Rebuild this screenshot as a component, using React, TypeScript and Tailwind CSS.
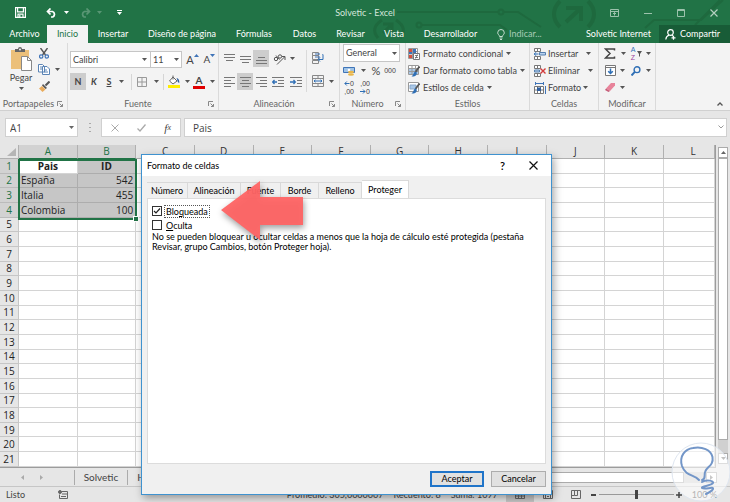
import { useState } from 'react';
import type { ReactNode } from 'react';

const ribbonTabs = [
  { name: 'Archivo', cls: 'w-[45px]' },
  { name: 'Inicio', cls: 'w-[41px]' },
  { name: 'Insertar', cls: 'w-[50px]' },
  { name: 'Diseño de página', cls: 'w-[88px]' },
  { name: 'Fórmulas', cls: 'w-[56px]' },
  { name: 'Datos', cls: 'w-[45px]' },
  { name: 'Revisar', cls: 'w-[47px]' },
  { name: 'Vista', cls: 'w-[40px]' },
  { name: 'Desarrollador', cls: 'w-[73px]' },
];

const columns = ['A', 'B', 'C', 'D', 'E', 'F', 'G', 'H', 'I', 'J', 'K', 'L'];
const rows = Array.from({ length: 21 }, (_, i) => i + 1);

const cells: Record<string, string> = {
  A1: 'Pais', B1: 'ID',
  A2: 'España', B2: '542',
  A3: 'Italia', B3: '455',
  A4: 'Colombia', B4: '100',
};

const dialogTabs = [
  { name: 'Número', cls: 'w-[41px]' },
  { name: 'Alineación', cls: 'w-[53px]' },
  { name: 'Fuente', cls: 'w-[40px]' },
  { name: 'Borde', cls: 'w-[38px]' },
  { name: 'Relleno', cls: 'w-[43px]' },
  { name: 'Proteger', cls: 'w-[47px]' },
];

function Caret({ className = 'text-[#555]' }: { className?: string }) {
  return (
    <svg className={`w-[5px] h-[3px] shrink-0 ${className}`} viewBox="0 0 5 3" fill="currentColor">
      <path d="M0 0h5L2.5 3z" />
    </svg>
  );
}

function IconBtn({ label, className = '', children }: { label: string; className?: string; children: ReactNode }) {
  return (
    <button type="button" aria-label={label} className={`flex items-center justify-center shrink-0 ${className}`}>
      {children}
    </button>
  );
}

function Group({ label, className, launcher, children }: { label: string; className: string; launcher?: boolean; children: ReactNode }) {
  return (
    <section className={`flex flex-col shrink-0 border-r border-[#dadada] ${className}`}>
      <div className="h-[54px]">{children}</div>
      <div className="h-[13px] flex items-center text-[9px] text-[#666]">
        <span className="flex-1 text-center">{label}</span>
        {launcher && (
          <IconBtn label={`Más opciones de ${label}`} className="mr-1">
            <svg className="w-[6px] h-[6px]" viewBox="0 0 6 6" fill="none" stroke="#888" strokeWidth="1">
              <path d="M.5 5V.5H5M2.500 2.500l3 3M5.500 3v2.500H3" />
            </svg>
          </IconBtn>
        )}
      </div>
    </section>
  );
}

function Lines({ d }: { d: string }) {
  return (
    <svg className="w-[11px] h-[11px]" viewBox="0 0 11 11" stroke="#777" strokeWidth="1">
      <path d={d} />
    </svg>
  );
}

function StyleIcon({ kind }: { kind: 'cond' | 'table' | 'cell' }) {
  return (
    <svg className="w-[12px] h-[12px] shrink-0" viewBox="0 0 12 12" fill="none">
      {kind === 'cond' ? (
        <>
          <path d="M.5.5h9v10h-9zM.5 3.500h9M.5 7h9M4.500.5v10" stroke="#999" fill="#fff" />
          <path d="M1 1h3v3H1zM1 7h3v3H1z" fill="#d6503f" />
          <path d="M5 1h3v5H5zM1 4h3v2H1z" fill="#3f74b8" />
          <path d="M5.500 5.500h6v6h-6z" fill="#fff" stroke="#777" />
          <path d="M7 7.500h3M7 9.500h3M9.500 6.500l-2 4" stroke="#555" strokeWidth=".7" />
        </>
      ) : (
        <>
          <path d="M.5.5h10v9H.5z" stroke="#999" fill="#fff" />
          {kind === 'table' && <path d="M1 4h9v5H1z" fill="#a9c8e8" />}
          {kind === 'table' && <path d="M.5 3.500h10M.5 6.500h10M4 .5v9M7.500.5v9" stroke="#999" />}
          {kind === 'cell' && <path d="M2 3h6v4H2z" fill="#a9c8e8" stroke="#8aa9cc" />}
          <path d="M11.500 1.500L7.500 7" stroke="#555" strokeWidth="1.800" />
          <path d="M7.500 6.500C5.500 7 6 9.500 3.500 11.500c3 .5 5.700-.8 5.200-4z" fill="#2f6fb5" />
        </>
      )}
    </svg>
  );
}

function CellsIcon({ kind }: { kind: 'insert' | 'delete' | 'format' }) {
  return (
    <svg className="w-[12px] h-[12px] shrink-0" viewBox="0 0 12 12" fill="none" stroke="#777">
      {kind === 'format' ? (
        <>
          <path d="M1.500 0v3M9.500 0v3M1.500 1.500h8" stroke="#3f74b8" />
          <path d="M.5 4.500h9v7h-9zM3.500 4.500v7M6.500 4.500v7M.5 8h9" fill="#fff" />
          <path d="M3 5.500h4v3.500H3z" fill="#2f5f9f" stroke="none" />
          <path d="M11.500 4v8" stroke="#3f74b8" />
        </>
      ) : (
        <>
          <path d="M.5.5h6v3h-6zM3.500.5v3M.5 8.500h6v3h-6zM3.500 8.500v3" fill="#fff" />
          {kind === 'insert' ? (
            <>
              <path d="M5.500 4.500h6v2.500h-6z" fill="#b9d2ee" stroke="#5580b0" />
              <path d="M4.500 6H0M2 4.200L.3 6 2 7.800" stroke="#2f6fb5" />
            </>
          ) : (
            <>
              <path d="M.5 5h5v2h-5z" fill="#b9d2ee" stroke="#5580b0" />
              <path d="M6.500 3.500l5 5M11.500 3.500l-5 5" stroke="#d23a3a" strokeWidth="1.400" />
            </>
          )}
        </>
      )}
    </svg>
  );
}

function TitleBar() {
  return (
    <div className="relative h-[25px] flex items-center text-white">
      <div className="flex items-center flex-1">
        <IconBtn label="Guardar" className="ml-[15px]">
          <svg className="w-[11px] h-[11px]" viewBox="0 0 11 11" fill="none" stroke="#fff" strokeWidth="1.200">
            <path d="M.6.600h9.800v9.800H.6zM2.600.8v4h5.800v-4M3 10.200V7.200h5v3M4.800 8v2" />
          </svg>
        </IconBtn>
        <IconBtn label="Deshacer" className="ml-5 gap-[7px]">
          <svg className="w-[11px] h-[10px]" viewBox="0 0 11 10" fill="none" stroke="#fff" strokeWidth="1.700">
            <path d="M4.500.5L1.500 3.500l3 3M1.500 3.500h5a3 3 0 0 1 .3 5.500H5" />
          </svg>
          <Caret className="text-white" />
        </IconBtn>
        <IconBtn label="Rehacer" className="ml-[11px] gap-[6px] opacity-25">
          <svg className="w-[11px] h-[10px]" viewBox="0 0 11 10" fill="none" stroke="#fff" strokeWidth="1.700">
            <path d="M6.500.5l3 3-3 3M9.500 3.500h-5A3 3 0 0 0 4.200 9H6" />
          </svg>
          <Caret className="text-white" />
        </IconBtn>
        <IconBtn label="Personalizar barra" className="ml-[15px]">
          <svg className="w-[5px] h-[5px]" viewBox="0 0 5 5" fill="#fff">
            <path d="M0 0h5v1H0zM0 2h5L2.500 5z" />
          </svg>
        </IconBtn>
      </div>
      <h1 className="pl-3 text-[9px] text-[#d5e6dc]">Solvetic - Excel</h1>
      <div className="flex-1 flex items-center justify-end gap-[25px] pr-3">
        <IconBtn label="Opciones de la cinta">
          <svg className="w-[9px] h-[8px]" viewBox="0 0 9 8" fill="none" stroke="#9cc2ac">
            <path d="M.5.5h8v7h-8zM.5 2.500h8M4.500 6.500v-3M3 5l1.500-1.500L6 5" />
          </svg>
        </IconBtn>
        <IconBtn label="Minimizar">
          <svg className="w-[8px] h-[8px]" viewBox="0 0 8 8" stroke="#9cc2ac"><path d="M0 4.500h8" /></svg>
        </IconBtn>
        <IconBtn label="Maximizar">
          <svg className="w-[8px] h-[8px]" viewBox="0 0 8 8" fill="none" stroke="#9cc2ac"><path d="M.5.5h7v7h-7zM0 1.500h8" /></svg>
        </IconBtn>
        <IconBtn label="Cerrar">
          <svg className="w-[8px] h-[8px]" viewBox="0 0 8 8" stroke="#b5d0c0" strokeWidth="1.200"><path d="M.5.5l7 7M7.500.5l-7 7" /></svg>
        </IconBtn>
      </div>
    </div>
  );
}

// Circuit pattern behind the right half of the title bar
function Circuit() {
  return (
    <svg className="absolute right-0 top-0 w-[370px] h-[43px]" viewBox="0 0 370 43" fill="none" stroke="#1e693e" strokeWidth="2">
      <path d="M37 12h101M144 12h14l23 15M62 25h78l7 5" />
      <circle cx="141" cy="12" r="2.500" />
      <circle cx="59" cy="25" r="2.500" />
      <path d="M22 20c-9 6-9 12-4 18M36 20c9 6 9 12 4 18" strokeWidth="3" />
      <path d="M23 24h9v9M32 24l-9 9" strokeWidth="3" />
      <path d="M200 1c-8 8-8 18 0 26M228 1c8 8 8 18 0 26" strokeWidth="4" />
      <path d="M206 8h15v13M221 8l-15 14" strokeWidth="4" />
      <path d="M285 28l9-8h47l22-20M335 25l25-25" />
    </svg>
  );
}

function RibbonTabs() {
  const [active, setActive] = useState('Inicio');
  return (
    <nav className="relative h-[18px] flex pl-[2px] text-[9px] text-white">
      {ribbonTabs.map((t) => (
        <button
          key={t.name}
          type="button"
          onClick={() => setActive(t.name)}
          className={`shrink-0 whitespace-nowrap text-center ${t.cls} ${active === t.name ? 'bg-[#f3f3f3] text-[#217346]' : ''}`}
        >
          {t.name}
        </button>
      ))}
      <button type="button" className="ml-[10px] flex items-center gap-1 text-[#a8cbb7]">
        <svg className="w-[8px] h-[11px]" viewBox="0 0 8 11" fill="none" stroke="#c5dccf">
          <path d="M2.500 7.500C2.500 6 .7 5.500.7 3.800a3.300 3.300 0 0 1 6.600 0C7.300 5.500 5.500 6 5.500 7.500zM2.500 9h3M3 10.500h2" />
        </svg>
        Indicar...
      </button>
      <div className="flex-1" />
      <button type="button" className="pr-2 whitespace-nowrap">Solvetic Internet</button>
      <button type="button" className="w-[71px] pr-1 bg-[#185c37] flex items-center justify-center gap-1">
        <svg className="w-[11px] h-[11px]" viewBox="0 0 11 11" fill="none" stroke="#fff" strokeWidth="1.200">
          <circle cx="5.500" cy="3.500" r="2.800" />
          <path d="M.8 10.500c.3-2.500 1.500-3.800 3.200-4.300M7 6.200l1.500 1.500M6.500 8.800h4M8.500 6.800v4" />
        </svg>
        Compartir
      </button>
    </nav>
  );
}

function Ribbon() {
  const btn = 'w-[16px] h-[17px]';
  const tiny = "font-['Liberation_Sans',sans-serif] text-[7px] leading-[8px]";
  return (
    <div className="h-[68px] flex bg-[#f3f3f3] border-b border-[#d0d0d0] text-[9px] text-[#444]">
      <Group label="Portapapeles" className="w-[68px]" launcher>
        <div className="flex pl-2 pt-1">
          <button type="button" className="w-[26px] flex flex-col items-center">
            <svg className="w-[22px] h-[24px]" viewBox="0 0 22 24">
              <path d="M1 3h18v19H1z" fill="#ecc07a" />
              <path d="M5 5V2h3a2 2 0 0 1 4 0h3v3z" fill="#666" />
              <circle cx="10" cy="2.500" r="1" fill="#f3f3f3" />
              <path d="M11.500 9.500h6l4 4v10h-10z" fill="#fff" stroke="#888" />
              <path d="M17.500 9.500v4h4" fill="none" stroke="#888" />
            </svg>
            <span className="leading-[13px]">Pegar</span>
            <Caret className="mt-[3px] text-[#555]" />
          </button>
          <div className="ml-1 flex flex-col gap-1">
            <IconBtn label="Cortar" className="w-[11px] h-[12px]">
              <svg className="w-[10px] h-[11px]" viewBox="0 0 10 11" fill="none">
                <path d="M1.500 0l5 7M8.500 0l-5 7" stroke="#555" strokeWidth="1.400" />
                <circle cx="2.200" cy="8.500" r="1.700" stroke="#3f74b8" strokeWidth="1.200" />
                <circle cx="7.800" cy="8.500" r="1.700" stroke="#3f74b8" strokeWidth="1.200" />
              </svg>
            </IconBtn>
            <IconBtn label="Copiar" className="h-[13px] gap-[5px]">
              <svg className="w-[12px] h-[11px]" viewBox="0 0 12 11" fill="#fff" stroke="#5b84b5">
                <path d="M.5.5h4l2 2v5.500h-6zM4.500 2.500h4.500l2.500 2.500v5.500h-7z" />
                <path d="M2 3h2M2 5h2M6 6h3M6 8h4" />
              </svg>
              <Caret />
            </IconBtn>
            <IconBtn label="Copiar formato" className="w-[12px] h-[13px]">
              <svg className="w-[11px] h-[11px]" viewBox="0 0 11 11">
                <path d="M10.500.5L6.500 4.500" stroke="#555" strokeWidth="2" />
                <path d="M4 3l4 4-1.500 1L3 4.500z" fill="#555" />
                <path d="M3 5l3.500 3.500L3.500 11 0 7.500z" fill="#e9ab5b" />
              </svg>
            </IconBtn>
          </div>
        </div>
      </Group>

      <Group label="Fuente" className="w-[151px]" launcher>
        <div className="flex items-center pt-2 pl-[2px]">
          <div className="relative">
            <select aria-label="Fuente" className="appearance-none w-[81px] h-[17px] pl-[2px] bg-white border border-[#c6c6c6] text-[9px]">
              <option>Calibri</option>
            </select>
            <Caret className="absolute right-1 top-[7px] text-[#555]" />
          </div>
          <div className="relative">
            <select aria-label="Tamaño de fuente" className="appearance-none w-[31px] h-[17px] pl-[2px] bg-white border border-l-0 border-[#c6c6c6] text-[9px]">
              <option>11</option>
            </select>
            <Caret className="absolute right-[3px] top-[7px] text-[#555]" />
          </div>
          <IconBtn label="Aumentar tamaño" className="ml-1 w-[13px] text-[11px] leading-[17px]">
            A<Caret className="mb-2 rotate-180 text-[#3f74b8]" />
          </IconBtn>
          <IconBtn label="Disminuir tamaño" className="ml-1 w-[13px] text-[10px] leading-[17px]">
            A<Caret className="mb-2 text-[#3f74b8]" />
          </IconBtn>
        </div>
        <div className="flex items-center pt-[5px] pl-[2px]">
          <IconBtn label="Negrita" className={`${btn} bg-[#cdcdcd] font-bold`}>N</IconBtn>
          <IconBtn label="Cursiva" className={`${btn} font-bold italic`}>K</IconBtn>
          <IconBtn label="Subrayado" className="w-[27px] gap-2 font-bold">
            <span className="underline">S</span><Caret />
          </IconBtn>
          <span className="w-px h-[16px] bg-[#d5d5d5] mx-[2px]" />
          <IconBtn label="Bordes" className="w-[27px] gap-[7px]">
            <svg className="w-[10px] h-[10px]" viewBox="0 0 10 10" fill="none" stroke="#999">
              <path d="M.5.5h9v9h-9zM5 .5v9M.5 5h9" />
            </svg>
            <Caret />
          </IconBtn>
          <span className="w-px h-[16px] bg-[#d5d5d5] mx-[2px]" />
          <IconBtn label="Color de relleno" className="w-[25px] gap-1">
            <svg className="w-[13px] h-[13px]" viewBox="0 0 13 13">
              <path d="M0 10h12v3H0z" fill="#ffee00" />
              <path d="M5 2l4 4-4 3-3.500-3zM5 .5v4" fill="#fff" stroke="#666" />
              <path d="M8.500 3c2 .5 3 2 2.800 5-1.500-.5-2-2-2-3z" fill="#2f5f9f" />
            </svg>
            <Caret />
          </IconBtn>
          <IconBtn label="Color de fuente" className="w-[26px] gap-[5px]">
            <span className="w-[12px] border-b-[3px] border-[#e00000] text-[10px] leading-[11px] font-bold">A</span>
            <Caret />
          </IconBtn>
        </div>
      </Group>

      <Group label="Alineación" className="w-[121px]" launcher>
        <div className="flex">
          <div className="w-[88px] border-r border-[#dadada] mt-[7px] h-[42px]">
            <div className="flex pl-[2px]">
              <IconBtn label="Alinear arriba" className={btn}><Lines d="M0 1.500h11M0 4.500h11M2 7.500h7" /></IconBtn>
              <IconBtn label="Alinear en medio" className={btn}><Lines d="M0 3.500h11M0 6.500h11M2 9.500h7" /></IconBtn>
              <IconBtn label="Alinear abajo" className={`${btn} bg-[#cdcdcd]`}><Lines d="M2 4.500h7M0 7.500h11M0 10.500h11" /></IconBtn>
              <IconBtn label="Orientación" className="ml-1 gap-1">
                <svg className="w-[13px] h-[12px]" viewBox="0 0 13 12" fill="none" stroke="#555">
                  <circle cx="3" cy="6" r="1.700" />
                  <path d="M3 2.500l3.500 4" />
                  <circle cx="7" cy="3.500" r="1.700" />
                  <path d="M4 11.500L11.500 4M12 7V3.500H8.800" />
                </svg>
                <Caret />
              </IconBtn>
            </div>
            <div className="flex pl-[2px] mt-[6px]">
              <IconBtn label="Alinear a la izquierda" className={btn}><Lines d="M0 1.500h11M0 4.500h7M0 7.500h11M0 10.500h7" /></IconBtn>
              <IconBtn label="Centrar" className={`${btn} bg-[#cdcdcd]`}><Lines d="M0 1.500h11M2 4.500h7M0 7.500h11M2 10.500h7" /></IconBtn>
              <IconBtn label="Alinear a la derecha" className={btn}><Lines d="M0 1.500h11M4 4.500h7M0 7.500h11M4 10.500h7" /></IconBtn>
              <IconBtn label="Disminuir sangría" className="w-[18px]">
                <svg className="w-[12px] h-[10px]" viewBox="0 0 12 10" fill="none" stroke="#777">
                  <path d="M0 .5h12M6 3.500h6M6 6.500h6M0 9.500h12" />
                  <path d="M5 5H.5M2.500 3L.7 5l1.800 2" stroke="#2f6fb5" strokeWidth="1.300" />
                </svg>
              </IconBtn>
              <IconBtn label="Aumentar sangría" className="w-[18px]">
                <svg className="w-[12px] h-[10px]" viewBox="0 0 12 10" fill="none" stroke="#777">
                  <path d="M0 .5h12M7 3.500h5M7 6.500h5M0 9.500h12" />
                  <path d="M0 5h5M3.500 3l1.800 2-1.800 2" stroke="#2f6fb5" strokeWidth="1.300" />
                </svg>
              </IconBtn>
            </div>
          </div>
          <div className="pl-[5px] pt-[9px] flex flex-col gap-[11px] items-start">
            <IconBtn label="Ajustar texto">
              <svg className="w-[12px] h-[12px]" viewBox="0 0 12 12" fill="none" stroke="#888">
                <path d="M.5.5h6v3h-6zM.5 3.500h6v4h-6zM.5 8.500h6v3h-6z" />
                <path d="M3 2h5M3 5h5" stroke="#3f74b8" />
                <path d="M10.500 2.500H11v5H6.500M8 5.500l-2 2 2 2" stroke="#2f6fb5" />
              </svg>
            </IconBtn>
            <IconBtn label="Combinar y centrar" className="gap-[5px]">
              <svg className="w-[12px] h-[12px]" viewBox="0 0 12 12" fill="none" stroke="#888">
                <path d="M.5.5h11v11H.5zM6 .5v3M6 8.500v3M.5 3.500h11M.5 8.500h11" />
                <path d="M2 6h8M3.500 4.800L2 6l1.500 1.200M8.500 4.800L10 6 8.500 7.200" stroke="#2f6fb5" />
              </svg>
              <Caret />
            </IconBtn>
          </div>
        </div>
      </Group>

      <Group label="Número" className="w-[66px]" launcher>
        <div className="pl-[3px] pt-px">
          <div className="relative w-[57px]">
            <select aria-label="Formato de número" className="block appearance-none w-full h-[18px] pl-[2px] bg-white border border-[#c6c6c6] text-[9px]">
              <option>General</option>
            </select>
            <Caret className="absolute right-[3px] top-2 text-[#555]" />
          </div>
          <div className="flex items-center h-[17px]">
            <IconBtn label="Formato de contabilidad" className="gap-[5px]">
              <svg className="w-[13px] h-[10px]" viewBox="0 0 13 10">
                <path d="M.5 1.500h11v5H.5z" fill="#9fc3e6" stroke="#3f74b8" />
                <circle cx="6" cy="4" r="1.300" fill="#fff" />
                <ellipse cx="8" cy="6" rx="3" ry="1.200" fill="#e9b64a" />
                <ellipse cx="8" cy="8.500" rx="3" ry="1.200" fill="#e9b64a" />
              </svg>
              <Caret />
            </IconBtn>
            <IconBtn label="Estilo porcentual" className="ml-[3px] w-[14px] text-[11px] leading-[14px]">%</IconBtn>
            <IconBtn label="Estilo millares" className={`w-[14px] ${tiny}`}>000</IconBtn>
          </div>
          <div className="flex items-center h-[17px] gap-1">
            <IconBtn label="Aumentar decimales" className={`w-[12px] ${tiny}`}>
              <span className="flex flex-col items-end">
                <span className="flex items-center">
                  <svg className="w-[6px] h-[5px]" viewBox="0 0 6 5" fill="none" stroke="#2f6fb5"><path d="M5.500 2.500H1M2.800.5l-2 2 2 2" /></svg>
                  0
                </span>
                <span>,00</span>
              </span>
            </IconBtn>
            <IconBtn label="Disminuir decimales" className={`w-[12px] ${tiny}`}>
              <span className="flex flex-col items-end">
                <span>,00</span>
                <span className="flex items-center">
                  <svg className="w-[6px] h-[5px]" viewBox="0 0 6 5" fill="none" stroke="#2f6fb5"><path d="M0 2.500h5M3 .5l2 2-2 2" /></svg>
                  0
                </span>
              </span>
            </IconBtn>
          </div>
        </div>
      </Group>

      <Group label="Estilos" className="w-[124px]">
        <div className="flex flex-col items-start pl-[2px] pt-[2px]">
          <button type="button" className="h-[17px] flex items-center gap-[3px] whitespace-nowrap"><StyleIcon kind="cond" />Formato condicional<Caret /></button>
          <button type="button" className="h-[17px] flex items-center gap-[3px] whitespace-nowrap"><StyleIcon kind="table" />Dar formato como tabla<Caret /></button>
          <button type="button" className="h-[17px] flex items-center gap-[3px] whitespace-nowrap"><StyleIcon kind="cell" />Estilos de celda<Caret /></button>
        </div>
      </Group>

      <Group label="Celdas" className="w-[69px]">
        <div className="flex flex-col items-start pl-1 pt-[2px]">
          <button type="button" className="h-[17px] flex items-center gap-[2px]"><CellsIcon kind="insert" />Insertar<Caret className="ml-[6px] text-[#555]" /></button>
          <button type="button" className="h-[17px] flex items-center gap-[2px]"><CellsIcon kind="delete" />Eliminar<Caret className="ml-[6px] text-[#555]" /></button>
          <button type="button" className="h-[17px] flex items-center gap-[2px]"><CellsIcon kind="format" />Formato<Caret /></button>
        </div>
      </Group>

      <Group label="Modificar" className="w-[57px]">
        <div className="grid grid-cols-[26px_26px] pl-[3px] pt-[2px]">
          <IconBtn label="Autosuma" className="h-[17px] gap-[5px]">
            <svg className="w-[12px] h-[11px]" viewBox="0 0 12 11" fill="none" stroke="#444" strokeWidth="1.500"><path d="M10.500 2.500V1h-9l4.500 4.500L1.500 10h9V8.500" /></svg>
            <Caret />
          </IconBtn>
          <IconBtn label="Ordenar y filtrar" className="h-[17px] gap-[2px]">
            <span className={`flex flex-col ${tiny}`}><span className="text-[#2f6fb5]">A</span><span className="text-[#9b3fa0]">Z</span></span>
            <svg className="w-[5px] h-[6px]" viewBox="0 0 5 6" fill="#555"><path d="M0 0h5L3 3v3L2 5V3z" /></svg>
            <Caret className="ml-[2px] text-[#555]" />
          </IconBtn>
          <IconBtn label="Rellenar" className="h-[17px] gap-1">
            <svg className="w-[11px] h-[11px]" viewBox="0 0 11 11" fill="#fff" stroke="#777">
              <path d="M.5.5h10v10H.5zM.5 2.500h10" />
              <path d="M5.500 3.500v5M3.200 6.200l2.300 2.300 2.300-2.300" fill="none" stroke="#2f6fb5" strokeWidth="1.500" />
            </svg>
            <Caret />
          </IconBtn>
          <IconBtn label="Buscar y seleccionar" className="h-[17px] gap-[5px]">
            <svg className="w-[10px] h-[10px]" viewBox="0 0 10 10" fill="none" stroke="#2f6fb5" strokeWidth="1.400"><circle cx="6" cy="3.700" r="2.900" /><path d="M3.800 5.900L.5 9.500" strokeWidth="2" /></svg>
            <Caret />
          </IconBtn>
          <IconBtn label="Borrar" className="h-[17px] gap-1">
            <svg className="w-[11px] h-[9px]" viewBox="0 0 11 9"><path d="M6 0h4v2.500L5 8 1 5.500z" fill="#e8839a" /><path d="M1 5.500L5 8 3.500 9 0 7z" fill="#c65c78" /></svg>
            <Caret />
          </IconBtn>
        </div>
      </Group>

      <div className="flex-1 flex items-end justify-end pr-[7px] pb-1">
        <IconBtn label="Contraer la cinta">
          <svg className="w-[6px] h-[4px]" viewBox="0 0 6 4" fill="none" stroke="#555" strokeWidth="1.300"><path d="M.5 3.500L3 1l2.500 2.500" /></svg>
        </IconBtn>
      </div>
    </div>
  );
}

function FormulaBar() {
  return (
    <div className="h-[34px] flex items-start pt-[7px] pl-[5px] pr-[3px] font-['Open_Sans',sans-serif] text-[10px] text-[#444]">
      <div className="relative">
        <input aria-label="Cuadro de nombres" defaultValue="A1" className="block w-[73px] h-[19px] pl-1 bg-white border border-[#d0d0d0]" />
        <Caret className="absolute right-1 top-2 text-[#666]" />
      </div>
      <svg className="w-[2px] h-[9px] mt-[5px] ml-[11px]" viewBox="0 0 2 9" fill="#aaa"><path d="M0 0h2v1H0zM0 4h2v1H0zM0 8h2v1H0z" /></svg>
      <div className="ml-[10px] w-[80px] h-[19px] flex items-center justify-around bg-white border border-[#d0d0d0]">
        <IconBtn label="Cancelar">
          <svg className="w-[8px] h-[8px]" viewBox="0 0 8 8" stroke="#aaa"><path d="M.5.5l7 7M7.500.5l-7 7" /></svg>
        </IconBtn>
        <IconBtn label="Introducir">
          <svg className="w-[9px] h-[8px]" viewBox="0 0 9 8" fill="none" stroke="#aaa" strokeWidth="1.300"><path d="M.5 4.500L3 7l5.500-6.500" /></svg>
        </IconBtn>
        <IconBtn label="Insertar función" className="font-['Liberation_Serif',serif] italic text-[11px] leading-[14px]">
          f<span className="text-[8px]">x</span>
        </IconBtn>
      </div>
      <div className="relative flex-1 ml-[3px]">
        <input aria-label="Barra de fórmulas" defaultValue="Pais" className="block w-full h-[19px] pl-2 bg-white border border-[#d0d0d0]" />
        <svg className="absolute right-[3px] top-[7px] w-[6px] h-[4px]" viewBox="0 0 6 4" fill="none" stroke="#999"><path d="M.5.5L3 3 5.500.5" /></svg>
      </div>
    </div>
  );
}

function Sheet() {
  return (
    <div className="flex bg-[#e6e6e6]">
      <div className="relative flex-1 border-b border-r border-[#9c9c9c]">
        <table className="w-full h-[322px] table-fixed border-separate border-spacing-0 bg-white font-['Open_Sans',sans-serif] text-[10px] leading-[12px] text-[#222]">
          <colgroup>
            <col className="w-[19px]" />
            {columns.map((c) => <col key={c} className={c === 'L' ? 'w-[51px]' : ''} />)}
          </colgroup>
          <thead>
            <tr>
              <th className="p-0 bg-[#e6e6e6] border-b border-r border-[#b0b0b0] align-bottom">
                <svg className="ml-auto mr-[2px] mb-[2px] w-[9px] h-[8px]" viewBox="0 0 9 8" fill="#b5b5b5"><path d="M9 0v8H0z" /></svg>
              </th>
              {columns.map((c) => (
                <th
                  key={c}
                  scope="col"
                  className={`py-0 pr-0 font-normal leading-[13px] border-b border-r ${c === 'L' ? 'pl-2' : 'pl-0'} ${c < 'C' ? 'bg-[#d2d2d2] text-[#217346] border-b-[#217346] border-r-[#b0b0b0]' : 'bg-[#e6e6e6] text-[#333] border-[#b0b0b0]'}`}
                >
                  {c}
                </th>
              ))}
            </tr>
          </thead>
          <tbody>
            {rows.map((r) => (
              <tr key={r}>
                <th
                  scope="row"
                  className={`p-0 font-normal border-b border-r ${r < 5 ? 'bg-[#d2d2d2] text-[#217346] border-[#bbb]' : 'bg-[#e6e6e6] text-[#222] border-[#c6c6c6]'}`}
                >
                  {r}
                </th>
                {columns.map((c) => {
                  const id = `${c}${r}`;
                  const selected = r < 5 && c < 'C';
                  const bg = selected && id !== 'A1' ? 'bg-[#c6c6c6] border-[#adadad]' : 'border-[#d4d4d4]';
                  const align = r === 1 ? 'text-center font-bold' : c === 'B' ? 'text-right' : 'text-left';
                  return <td key={c} className={`py-0 px-[2px] border-b border-r ${bg} ${align}`}>{cells[id]}</td>;
                })}
              </tr>
            ))}
          </tbody>
        </table>
        {/* Selection frame A1:B4 */}
        <div className="absolute left-[18px] top-[14px] w-[119px] h-[61px] border-2 border-[#217346]">
          <span className="absolute -right-[3px] -bottom-[3px] w-1 h-1 bg-[#217346] outline outline-white" />
        </div>
      </div>
      <div className="w-[14px] flex flex-col pl-[2px] pr-[2px] pb-1">
        <button type="button" aria-label="Subir" className="h-[11px] mt-[2px] bg-white border border-[#ababab] flex items-center justify-center"><Caret className="rotate-180 text-[#666]" /></button>
        <div className="h-[282px] bg-white border border-[#ababab]" />
        <div className="flex-1 bg-[#d0d0d0]" />
        <button type="button" aria-label="Bajar" className="h-[11px] bg-white border border-[#ababab] flex items-center justify-center"><Caret className="text-[#666]" /></button>
      </div>
    </div>
  );
}

function BottomBars() {
  return (
    <>
      <div className="h-[18px] flex items-center text-[10px] text-[#444]">
        <div className="w-[74px] flex items-center gap-4 pl-[21px] text-[#aaa]">
          <IconBtn label="Hoja anterior"><svg className="w-[3px] h-[5px]" viewBox="0 0 3 5" fill="currentColor"><path d="M3 0v5L0 2.500z" /></svg></IconBtn>
          <IconBtn label="Hoja siguiente"><svg className="w-[3px] h-[5px]" viewBox="0 0 3 5" fill="currentColor"><path d="M0 0v5l3-2.500z" /></svg></IconBtn>
        </div>
        <button type="button" className="w-[54px] h-[15px] border-x border-[#ababab] leading-[13px]">Solvetic</button>
        <button type="button" className="w-[46px] h-[15px] border-r border-[#ababab] leading-[13px]">Hoja2</button>
        <div className="flex-1" />
        <div className="w-[172px] h-[11px] mr-[13px] flex bg-[#d0d0d0]">
          <div className="flex-1 bg-white border border-[#ababab]" />
          <div className="w-[22px]" />
          <button type="button" aria-label="Desplazar a la derecha" className="w-[11px] bg-white border border-[#ababab] flex items-center justify-center">
            <Caret className="-rotate-90 text-[#777]" />
          </button>
        </div>
      </div>
      <footer className="h-[17px] flex items-center border-t border-b border-t-[#c6c6c6] border-b-[#777] pl-[6px] pr-[13px] text-[9px] text-[#444]">
        <span>Listo</span>
        <svg className="ml-[33px] w-[10px] h-[9px]" viewBox="0 0 10 9" fill="none" stroke="#666">
          <path d="M3.500 1.500h6v7h-8v-4M4 4h5M3 6.500h5" />
          <circle cx="2" cy="2" r="1.500" fill="#666" />
        </svg>
        <div className="flex-1 flex justify-end gap-[10px] whitespace-nowrap pr-2">
          <span>Promedio: 365,6666667</span>
          <span>Recuento: 8</span>
          <span>Suma: 1097</span>
        </div>
        <div className="flex items-center">
          <span className="flex">
            <IconBtn label="Normal" className="w-[28px] h-[15px] bg-[#c6c6c6]">
              <svg className="w-[10px] h-[9px]" viewBox="0 0 10 9" fill="none" stroke="#666"><path d="M.5.5h9v8h-9zM.5 3.500h9M.5 6h9M3.500.5v8M6.500.5v8" /></svg>
            </IconBtn>
            <IconBtn label="Diseño de página" className="w-[28px] h-[15px]">
              <svg className="w-[10px] h-[9px]" viewBox="0 0 10 9" fill="none" stroke="#666"><path d="M.5.5h9v8h-9zM2.500 2.500h5v6M2.500 2.500v6M4 4.500h2M4 6.500h2" /></svg>
            </IconBtn>
            <IconBtn label="Vista previa de salto de página" className="w-[28px] h-[15px]">
              <svg className="w-[10px] h-[9px]" viewBox="0 0 10 9" fill="none" stroke="#666"><path d="M.5.5h9v8h-9zM3.500.5v5h3v-5M.5 5.500h3" /></svg>
            </IconBtn>
          </span>
          <button type="button" aria-label="Alejar" className="w-[8px] h-[8px] flex items-center justify-center"><span className="w-[5px] h-[2px] bg-[#444]" /></button>
          <input
            type="range"
            aria-label="Zoom"
            defaultValue={50}
            className="mx-px w-[75px] h-[9px] appearance-none bg-transparent [&::-webkit-slider-runnable-track]:h-px [&::-webkit-slider-runnable-track]:bg-[#999] [&::-webkit-slider-thumb]:appearance-none [&::-webkit-slider-thumb]:w-[3px] [&::-webkit-slider-thumb]:h-[9px] [&::-webkit-slider-thumb]:-mt-1 [&::-webkit-slider-thumb]:bg-[#444]"
          />
          <button type="button" aria-label="Acercar" className="w-[8px] h-[8px] flex items-center justify-center">
            <svg className="w-[6px] h-[6px]" viewBox="0 0 6 6" stroke="#444" strokeWidth="1.500"><path d="M3 0v6M0 3h6" /></svg>
          </button>
          <span className="ml-[9px] whitespace-nowrap">100 %</span>
        </div>
      </footer>
    </>
  );
}

function Check({ label, mark, checked, onChange }: { label: ReactNode; mark?: boolean; checked: boolean; onChange: (v: boolean) => void }) {
  return (
    <label className="h-[14px] flex items-center gap-[2px]">
      <span className="relative w-[10px] h-[10px]">
        <input
          type="checkbox"
          checked={checked}
          onChange={(e) => onChange(e.target.checked)}
          className="peer block appearance-none w-[10px] h-[10px] bg-white border border-[#333]"
        />
        <svg className="absolute left-[1px] top-[1px] w-[8px] h-[8px] hidden peer-checked:block pointer-events-none" viewBox="0 0 8 8" fill="none" stroke="#222" strokeWidth="1.200">
          <path d="M1 4l2 2 4-4.500" />
        </svg>
      </span>
      <span className={`px-px leading-[11px] border border-dotted ${mark ? 'border-[#555]' : 'border-transparent'}`}>{label}</span>
    </label>
  );
}

function FormatDialog() {
  const [tab, setTab] = useState('Proteger');
  const [locked, setLocked] = useState(true);
  const [hidden, setHidden] = useState(false);
  return (
    <div
      role="dialog"
      aria-labelledby="dlg-title"
      className="absolute left-[141px] top-[154px] w-[411px] bg-[#f0f0f0] border border-[#3f92cf] shadow-[2px_3px_8px_rgba(0,0,0,0.35)] text-[9px] text-black"
    >
      <div className="h-[21px] flex items-center bg-white pl-[5px] pr-[13px]">
        <h2 id="dlg-title" className="flex-1">Formato de celdas</h2>
        <button type="button" aria-label="Ayuda" className="mr-[24px] text-[11px] font-semibold leading-[14px]">?</button>
        <IconBtn label="Cerrar">
          <svg className="w-[9px] h-[9px]" viewBox="0 0 9 9" stroke="#111" strokeWidth="1.200"><path d="M.5.5l8 8M8.500.5l-8 8" /></svg>
        </IconBtn>
      </div>
      <div role="tablist" className="flex items-end h-[22px] pl-[5px]">
        {dialogTabs.map((t) => (
          <button
            key={t.name}
            type="button"
            role="tab"
            aria-selected={tab === t.name}
            onClick={() => setTab(t.name)}
            className={`border-t border-r border-[#d9d9d9] ${t.cls} ${tab === t.name ? 'h-[18px] bg-white' : 'h-[16px] bg-[#f0f0f0]'}`}
          >
            {t.name}
          </button>
        ))}
      </div>
      <div className="mx-[5px] h-[266px] bg-white border border-t-[#dcdcdc] border-[#dcdcdc] pl-1 pt-[5px] pr-2">
        <Check mark label={<>Blo<u>q</u>ueada</>} checked={locked} onChange={setLocked} />
        <Check label={<><u>O</u>culta</>} checked={hidden} onChange={setHidden} />
        <p className="leading-[10px]">
          No se pueden bloquear u ocultar celdas a menos que la hoja de cálculo esté protegida (pestaña<br />
          Revisar, grupo Cambios, botón Proteger hoja).
        </p>
      </div>
      <div className="h-[30px] flex items-center justify-end gap-[7px] pr-[5px]">
        <button type="button" className="w-[54px] h-[16px] bg-[#e1e1e1] border-2 border-[#1f74c9] leading-[12px]">Aceptar</button>
        <button type="button" className="w-[55px] h-[16px] bg-[#e1e1e1] border border-[#adadad] leading-[14px]">Cancelar</button>
      </div>
    </div>
  );
}

export default function App() {
  return (
    <div className="relative w-full overflow-hidden bg-[#e6e6e6] font-[Lato,'Open_Sans',sans-serif]">
      <header className="relative bg-[#217346]">
        <Circuit />
        <TitleBar />
        <RibbonTabs />
      </header>
      <Ribbon />
      <FormulaBar />
      <Sheet />
      <BottomBars />
      <FormatDialog />

      {/* Pointer arrow */}
      <svg className="absolute left-[215px] top-[175px] w-[96px] h-[74px] pointer-events-none drop-shadow-[1px_3px_3px_rgba(0,0,0,0.4)]" viewBox="0 0 96 74">
        <path d="M6 35L45 6v16h43v28H45v15z" fill="#ff6464" fillOpacity=".95" />
      </svg>

      {/* Watermark bulb */}
      <svg className="absolute right-0 bottom-0 w-[66px] h-[66px] pointer-events-none" viewBox="0 0 66 66" fill="none">
        <circle cx="37" cy="35" r="29" fill="#fff" fillOpacity=".6" stroke="#dfe6f0" />
        <path
          d="M35 43C30 37 22 40 18 29C15 19 21 12 29 11C38 9 47 13 48.500 20C50 29 42 30 41 35C40 39 42 42 38 43M38 45C43 42 50 44 49 46C47 49 37 49 38 51C41 53 50 49 49 52C48 54 44 56 42 57"
          stroke="#7396c8"
          strokeWidth="2"
          strokeLinecap="round"
        />
      </svg>
    </div>
  );
}
